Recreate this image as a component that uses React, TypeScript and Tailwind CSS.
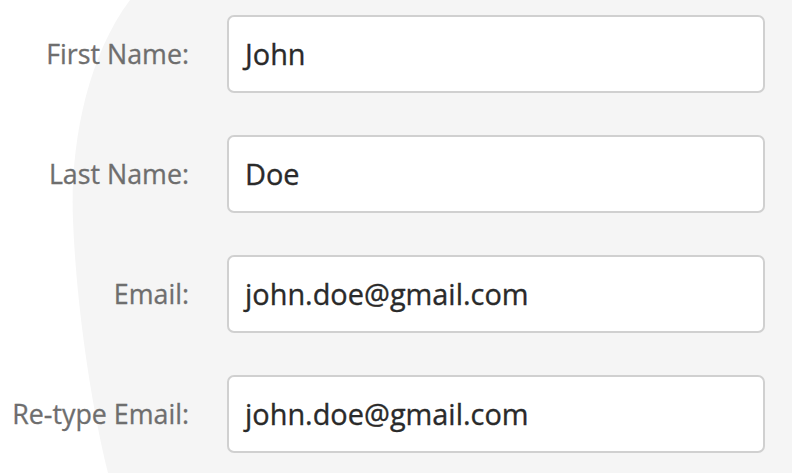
import React from 'react'

const fields = [
  { label: 'First Name:', value: 'John' },
  { label: 'Last Name:', value: 'Doe' },
  { label: 'Email:', value: 'john.doe@gmail.com' },
  { label: 'Re-type Email:', value: 'john.doe@gmail.com' },
]

export default function App() {
  return (
    <div
      className="relative h-[473px] w-[792px] overflow-hidden bg-white"
      style={{ fontFamily: '"Open Sans", "Noto Sans", sans-serif' }}
    >
      {/* backdrop curve */}
      <svg className="absolute inset-0" width="792" height="473" viewBox="0 0 792 473">
        <path
          d="M130,0 C85,60 70,150 73,220 C76,300 90,400 108,473 L792,473 L792,0 Z"
          fill="#f5f5f5"
        />
      </svg>

      <div className="relative flex flex-col gap-[42px] pt-[15px]">
        {fields.map((f) => (
          <div key={f.label} className="flex items-center">
            <label className="w-[189px] text-right text-[26.8px] leading-none text-[#6e6e6e] [-webkit-text-stroke:0.3px_#6e6e6e]">
              {f.label}
            </label>
            <div className="ml-[38px] flex h-[78px] w-[538px] items-center rounded-[7px] border-2 border-[#d0d0d0] bg-white pl-[16px] text-[28.9px] text-[#2a2a2a] [-webkit-text-stroke:0.35px_#2a2a2a]">
              {f.value}
            </div>
          </div>
        ))}
      </div>
    </div>
  )
}
